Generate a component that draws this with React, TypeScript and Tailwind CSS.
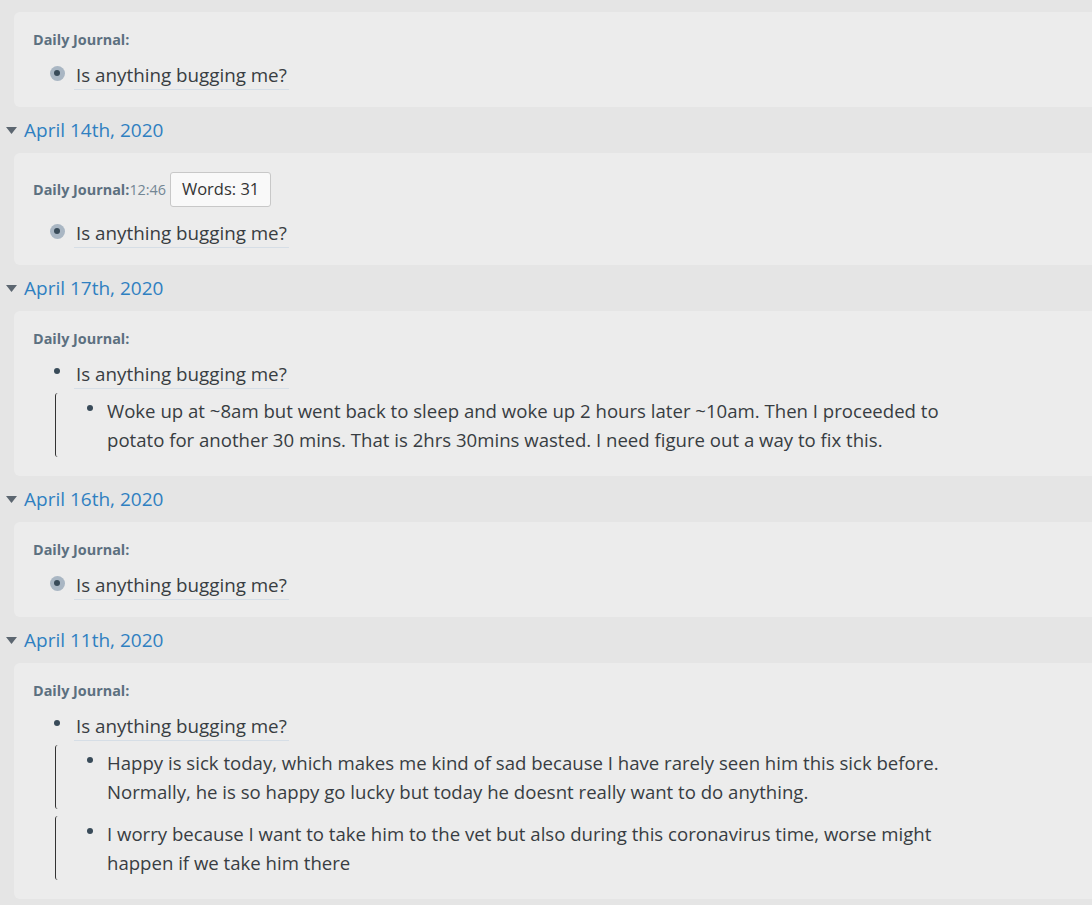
import React from "react";

const FONT = { fontFamily: '"Open Sans", "Noto Sans", sans-serif' };

function Header({ date }: { date: string }) {
  return (
    <div className="flex h-[46px] items-center">
      <svg width="11" height="7" viewBox="0 0 11 7" className="ml-[6px] mt-[1px]">
        <path d="M0 0 L11 0 L5.5 7 Z" fill="#5c6670" />
      </svg>
      <span className="ml-[7px] text-[19px] leading-none text-[#2f80c1]">{date}</span>
    </div>
  );
}

function Bullet({ collapsed }: { collapsed?: boolean }) {
  return (
    <div className="ml-[14px] flex h-[28px] w-[20px] shrink-0 items-center justify-center">
      {collapsed ? (
        <div className="flex h-[15px] w-[15px] items-center justify-center rounded-full bg-[#a9b6c3] -mt-[4px]">
          <div className="h-[6px] w-[6px] rounded-full bg-[#394b59]" />
        </div>
      ) : (
        <div className="h-[6px] w-[6px] rounded-full bg-[#394b59] -mt-[6px]" />
      )}
    </div>
  );
}

function Child({ lines }: { lines: string[] }) {
  return (
    <div className="ml-[22px] flex rounded-l-[3px] border-l border-[#333] py-[3px] pl-[24px]">
      <div className="flex h-[29px] w-[20px] shrink-0 items-center justify-center">
        <div className="-mt-[5px] h-[6px] w-[6px] rounded-full bg-[#394b59]" />
      </div>
      <div className="ml-[7px] whitespace-nowrap text-[18.6px] leading-[29px] text-[#383d42]">
        {lines.map((l, i) => (
          <div key={i}>{l}</div>
        ))}
      </div>
    </div>
  );
}

function Card({
  time,
  words,
  collapsed,
  children,
}: {
  time?: string;
  words?: number;
  collapsed?: boolean;
  children?: React.ReactNode;
}) {
  return (
    <div className="ml-[14px] w-[1100px] rounded-[6px] bg-[#ececec] pl-[19px] pt-[18px] pb-[17px]">
      <div className="flex min-h-[20px] items-center">
        <span className="text-[14.4px] font-bold leading-[20px] text-[#5c7080]">Daily Journal:</span>
        {time && <span className="text-[14.4px] leading-[20px] text-[#738694]">{time}</span>}
        {words !== undefined && (
          <span className="my-[1px] ml-[4px] flex h-[35px] w-[101px] items-center justify-center rounded-[3px] border border-[#c8c8c8] bg-[#f9f9f9] text-[16.5px] text-[#333]">
            Words: {words}
          </span>
        )}
      </div>
      <div className="mt-[11px] flex">
        <Bullet collapsed={collapsed} />
        <span className="ml-[7px] border-b border-[#d6dee6] px-[2px] text-[18.8px] leading-[28px] text-[#383d42]">
          Is anything bugging me?
        </span>
      </div>
      {children && <div className="mt-[4px] flex flex-col gap-[7px] pb-[2px]">{children}</div>}
    </div>
  );
}

export default function App() {
  return (
    <div className="min-h-[905px] w-full overflow-hidden bg-[#e5e5e5] pt-[12px]" style={FONT}>
      <Card collapsed />
      <Header date="April 14th, 2020" />
      <Card collapsed time="12:46" words={31} />
      <Header date="April 17th, 2020" />
      <Card>
        <Child
          lines={[
            "Woke up at ~8am but went back to sleep and woke up 2 hours later ~10am. Then I proceeded to",
            "potato for another 30 mins. That is 2hrs 30mins wasted. I need figure out a way to fix this.",
          ]}
        />
      </Card>
      <Header date="April 16th, 2020" />
      <Card collapsed />
      <Header date="April 11th, 2020" />
      <Card>
        <Child
          lines={[
            "Happy is sick today, which makes me kind of sad because I have rarely seen him this sick before.",
            "Normally, he is so happy go lucky but today he doesnt really want to do anything.",
          ]}
        />
        <Child
          lines={[
            "I worry because I want to take him to the vet but also during this coronavirus time, worse might",
            "happen if we take him there",
          ]}
        />
      </Card>
    </div>
  );
}
